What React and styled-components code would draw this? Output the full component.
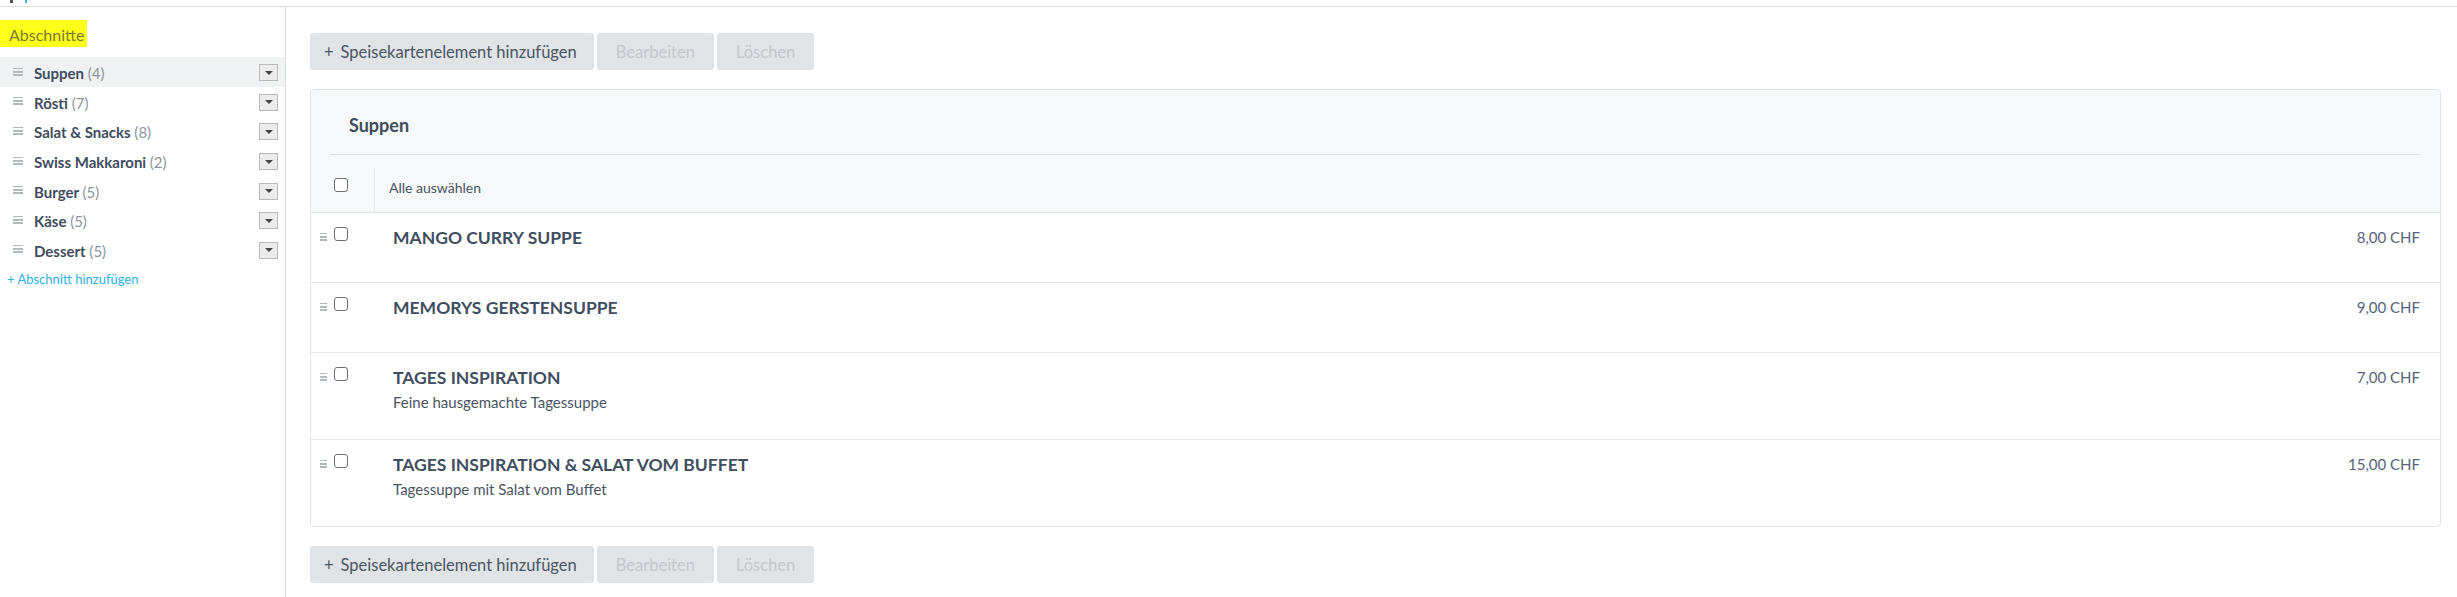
import React from "react";
import styled, { createGlobalStyle } from "styled-components";

const GlobalStyle = createGlobalStyle`
  html, body {
    margin: 0;
    padding: 0;
    background: #fff;
    font-family: Lato, "Open Sans", Arial, sans-serif;
  }
  * {
    box-sizing: border-box;
  }
`;

const sections = [
  { name: "Suppen", count: 4, active: true },
  { name: "Rösti", count: 7 },
  { name: "Salat & Snacks", count: 8 },
  { name: "Swiss Makkaroni", count: 2 },
  { name: "Burger", count: 5 },
  { name: "Käse", count: 5 },
  { name: "Dessert", count: 5 },
];

const items = [
  { title: "MANGO CURRY SUPPE", price: "8,00 CHF" },
  { title: "MEMORYS GERSTENSUPPE", price: "9,00 CHF" },
  {
    title: "TAGES INSPIRATION",
    desc: "Feine hausgemachte Tagessuppe",
    price: "7,00 CHF",
  },
  {
    title: "TAGES INSPIRATION & SALAT VOM BUFFET",
    desc: "Tagessuppe mit Salat vom Buffet",
    price: "15,00 CHF",
  },
];

function Toolbar() {
  return (
    <ButtonBar>
      <ActionButton $primary>
        <Plus>+</Plus>Speisekartenelement hinzufügen
      </ActionButton>
      <ActionButton disabled>Bearbeiten</ActionButton>
      <ActionButton disabled>Löschen</ActionButton>
    </ButtonBar>
  );
}

function App() {
  return (
    <>
      <GlobalStyle />
      <Page>
        {/* cut-off strip from the page above */}
        <TopStrip>
          <TopMark />
          <TopMark $blue />
        </TopStrip>
        <Body>
          <Sidebar>
            <Heading>
              <Highlight>Abschnitte</Highlight>
            </Heading>
            <SectionList>
              {sections.map((s) => (
                <SectionRow key={s.name} $active={s.active}>
                  <Handle $w={10} $h={8} />
                  <SectionName>
                    {s.name} <Count>({s.count})</Count>
                  </SectionName>
                  <DropButton>
                    <Caret />
                  </DropButton>
                </SectionRow>
              ))}
            </SectionList>
            <AddLink>+ Abschnitt hinzufügen</AddLink>
          </Sidebar>

          <Main>
            <Toolbar />
            <Panel>
              <PanelHead>
                <PanelTitle>Suppen</PanelTitle>
              </PanelHead>
              <SelectRow>
                <CheckCell>
                  <Checkbox />
                </CheckCell>
                <SelectLabel>Alle auswählen</SelectLabel>
              </SelectRow>
              {items.map((item) => (
                <ItemRow key={item.title}>
                  <ItemControls>
                    <Handle $w={7} $h={8} />
                    <Checkbox />
                  </ItemControls>
                  <ItemText>
                    <ItemTitle>{item.title}</ItemTitle>
                    {item.desc && <ItemDesc>{item.desc}</ItemDesc>}
                  </ItemText>
                  <Price>{item.price}</Price>
                </ItemRow>
              ))}
            </Panel>
            <Toolbar />
          </Main>
        </Body>
      </Page>
    </>
  );
}

const Page = styled.div`
  min-height: 100vh;
  display: flex;
  flex-direction: column;
`;

const TopStrip = styled.div`
  height: 7px;
  border-bottom: 1px solid #dedede;
  display: flex;
  gap: 12px;
  padding-left: 10px;
`;

const TopMark = styled.span`
  width: ${(p) => (p.$blue ? "2px" : "3px")};
  height: 3px;
  background: ${(p) => (p.$blue ? "#3bb0e6" : "#555")};
`;

const Body = styled.div`
  flex: 1;
  display: flex;
`;

const Sidebar = styled.aside`
  width: 286px;
  flex-shrink: 0;
  border-right: 1px solid #dadada;
`;

const Heading = styled.div`
  height: 50px;
  padding-top: 13px;
`;

const Highlight = styled.span`
  display: inline-block;
  height: 27px;
  padding: 4px 3px 0 9px;
  background: #ffff1a;
  color: #7b7d2c;
  font-size: 16px;
  line-height: 22px;
`;

const SectionList = styled.div`
  display: flex;
  flex-direction: column;
`;

const SectionRow = styled.div`
  height: 29.6px;
  display: flex;
  align-items: center;
  padding: 0 7px 0 13px;
  background: ${(p) => (p.$active ? "#f0f1f2" : "transparent")};
`;

const Handle = styled.span`
  width: ${(p) => p.$w}px;
  height: ${(p) => p.$h}px;
  flex-shrink: 0;
  background: linear-gradient(
    to bottom,
    #b3b8bd 0 1.5px,
    transparent 1.5px 3.25px,
    #b3b8bd 3.25px 4.75px,
    transparent 4.75px 6.5px,
    #b3b8bd 6.5px 8px
  );
`;

const SectionName = styled.span`
  flex: 1;
  margin-left: 11px;
  padding-top: 3px;
  font-size: 15px;
  font-weight: 700;
  color: #3e4c5e;
`;

const Count = styled.span`
  font-weight: 400;
  color: #8d959e;
`;

const DropButton = styled.span`
  width: 19px;
  height: 17px;
  display: flex;
  align-items: center;
  justify-content: center;
  background: #ececec;
  border: 1px solid #bababa;
  margin-top: 2px;
`;

const Caret = styled.span`
  width: 0;
  height: 0;
  border-left: 4px solid transparent;
  border-right: 4px solid transparent;
  border-top: 4px solid #444;
`;

const AddLink = styled.div`
  padding: 7px 0 0 7px;
  font-size: 13px;
  color: #2fb0e8;
`;

const Main = styled.main`
  flex: 1;
  padding: 26px 16px 0 24px;
`;

const ButtonBar = styled.div`
  display: flex;
  gap: 3px;
`;

const ActionButton = styled.button`
  height: 37px;
  padding: ${(p) => (p.$primary ? "0 17px 0 14px" : "0 19px")};
  border: none;
  border-radius: 3px;
  background: #e1e4e7;
  font-family: inherit;
  font-size: 16.5px;
  color: ${(p) => (p.disabled ? "#c3c8ce" : "#4a5563")};
  display: flex;
  align-items: center;
`;

const Plus = styled.span`
  margin-right: 7px;
`;

const Panel = styled.section`
  margin: 19px 0;
  border: 1px solid #dfe3e8;
  border-radius: 4px;
  overflow: hidden;
`;

const PanelHead = styled.div`
  background: #f7f8fa;
  padding: 0 20px 0 19px;
`;

const PanelTitle = styled.h2`
  margin: 0;
  height: 65px;
  display: flex;
  align-items: center;
  padding: 6px 0 0 19px;
  border-bottom: 1px solid #dfe3e8;
  font-size: 18px;
  font-weight: 700;
  color: #3e4c5e;
`;

const SelectRow = styled.div`
  height: 58px;
  display: flex;
  background: #f7f8fa;
  border-bottom: 1px solid #e3e6ea;
`;

const CheckCell = styled.div`
  width: 63px;
  display: flex;
  align-items: center;
  padding: 3px 0 0 23px;
`;

const SelectLabel = styled.div`
  flex: 1;
  margin-top: 13px;
  border-left: 1px solid #e3e6ea;
  padding: 0 0 5px 14px;
  display: flex;
  align-items: center;
  font-size: 14px;
  color: #4a5563;
`;

const Checkbox = styled.span`
  display: inline-block;
  width: 14px;
  height: 14px;
  flex-shrink: 0;
  border: 1px solid #6f6f6f;
  border-radius: 3px;
  background: #fff;
`;

const ItemRow = styled.div`
  min-height: 70px;
  display: flex;
  align-items: flex-start;
  padding: 14px 20px 27px 9px;
  border-bottom: 1px solid #e3e6ea;
  &:last-child {
    border-bottom: none;
  }
`;

const ItemControls = styled.div`
  display: flex;
  align-items: flex-end;
  gap: 7px;
  width: 73px;
  flex-shrink: 0;
`;

const ItemText = styled.div`
  flex: 1;
`;

const ItemTitle = styled.div`
  font-size: 17.5px;
  line-height: 22px;
  font-weight: 700;
  color: #404e60;
`;

const ItemDesc = styled.div`
  margin-top: 3px;
  font-size: 15px;
  line-height: 20px;
  color: #4a5563;
`;

const Price = styled.div`
  font-size: 15px;
  line-height: 20px;
  color: #56657a;
`;

export default App;
